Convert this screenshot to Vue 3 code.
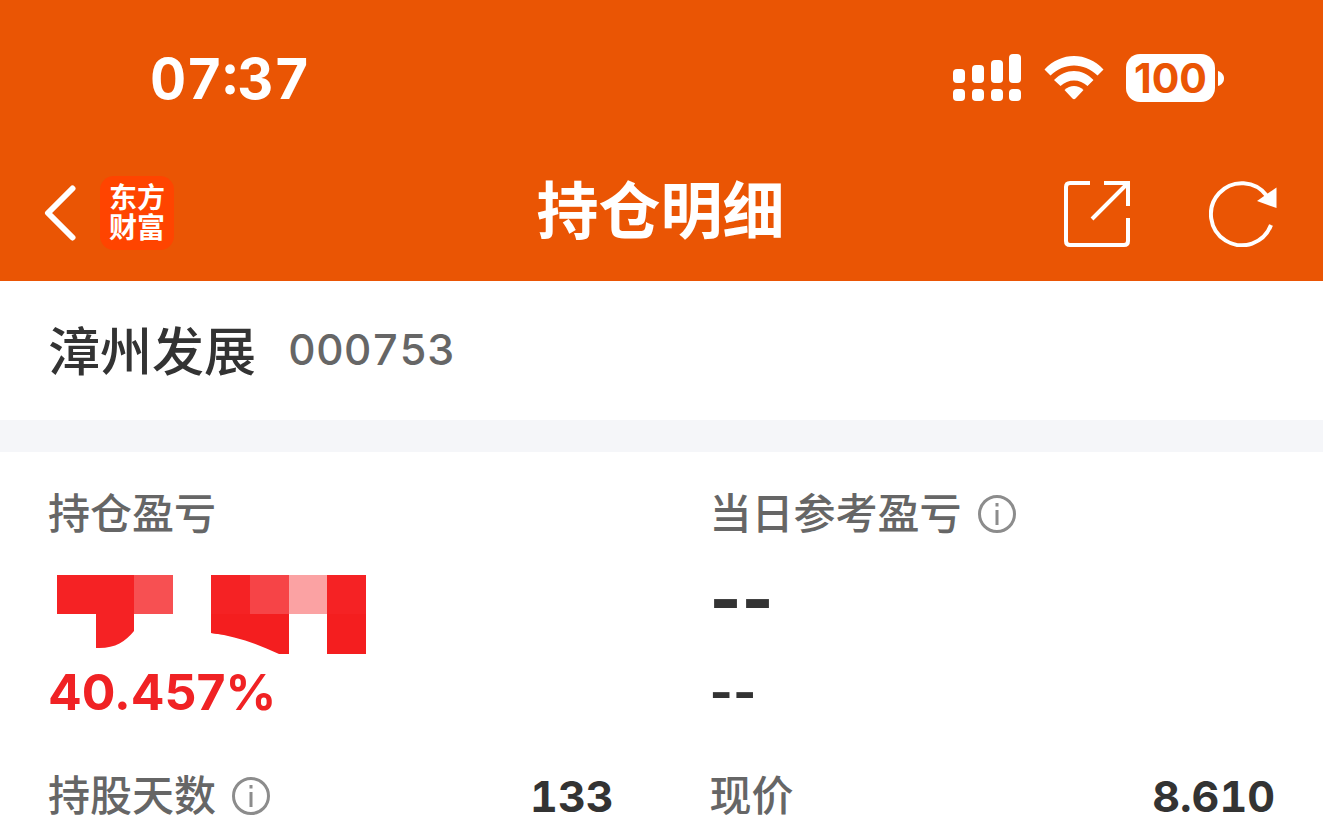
<template>
  <div class="page">
    <header class="header">
      <div class="status-bar">
        <time class="clock">07:37</time>
        <div class="status-icons">
          <svg class="signal" viewBox="0 0 69 48" role="img" aria-label="信号">
            <rect
              v-for="(bar, i) in signalBars"
              :key="i"
              :x="bar.x"
              :y="bar.y"
              width="12"
              :height="bar.height"
              rx="4"
            />
            <rect v-for="(bar, i) in signalBars" :key="'dot' + i" :x="bar.x" y="35" width="12" height="12" rx="4" />
          </svg>
          <svg class="wifi" viewBox="0 0 60 46" role="img" aria-label="Wi-Fi">
            <path d="M0.500 14.500C17 -3.500 43 -3.500 59.500 14.500L53.500 20.500C40 7 20 7 6.500 20.500Z" />
            <path d="M10 25C22 13 38 13 49.500 25L43.500 31C36 23.500 24 23.500 16.500 31Z" />
            <path d="M20.500 35C26 29.500 34 29.500 39.500 35L31.500 43.500Q30 45 28.500 43.500Z" />
          </svg>
          <div class="battery">
            <span class="battery-level">100</span>
            <svg class="battery-tip" viewBox="0 0 6 15" aria-hidden="true">
              <path d="M0 0C8 2 8 13 0 15Z" />
            </svg>
          </div>
        </div>
      </div>

      <nav class="nav">
        <div class="nav-side">
          <button type="button" class="icon-button" aria-label="返回">
            <svg class="back-icon" viewBox="0 0 32 56">
              <path d="M28.500 3.500L4 28L28.500 52.500" />
            </svg>
          </button>
          <a href="#" class="logo">东方财富</a>
        </div>
        <h1 class="title">持仓明细</h1>
        <div class="nav-side nav-actions">
          <button type="button" class="icon-button" aria-label="分享">
            <svg class="action-icon" viewBox="0 0 68 68">
              <path d="M27 4H7Q3 4 3 8V62Q3 66 7 66H61Q65 66 65 62V39" />
              <path d="M41 4H65V27M64 5L29 40" />
            </svg>
          </button>
          <button type="button" class="icon-button" aria-label="刷新">
            <svg class="action-icon" viewBox="0 0 68 68">
              <path d="M62 46A31 31 0 1 1 58 17" />
              <path class="arrow-head" d="M67.500 8.500V29L48 22Z" />
            </svg>
          </button>
        </div>
      </nav>
    </header>

    <section class="stock">
      <h2 class="stock-name">漳州发展</h2>
      <span class="stock-code">000753</span>
    </section>

    <main class="details">
      <div class="column">
        <div class="label">持仓盈亏</div>
        <div class="amount">
          <svg class="mosaic" viewBox="0 0 309 79" role="img" aria-label="已隐藏">
            <path fill="#f52224" d="M0 0H77V56C68 67 57 74 39 73V39H0Z" />
            <path fill="#f75052" d="M77 0H116V39H77Z" />
            <path fill="#f52224" d="M154 0H193V63L154 58Z" />
            <path fill="#f64447" d="M193 0H232V39H193Z" />
            <path fill="#fba2a3" d="M232 0H270V39H232Z" />
            <path fill="#f41e1f" d="M154 39H232V79H222C200 69 179 61 154 58Z" />
            <path fill="#f52224" d="M270 0H309V39H270Z" />
            <path fill="#f41e1f" d="M270 39H309V79H270Z" />
          </svg>
        </div>
        <div class="percent up">40.457%</div>
        <div class="row">
          <div class="label">
            持股天数
            <button type="button" class="icon-button" aria-label="持股天数说明">
              <svg class="info-icon" viewBox="0 0 38 38">
                <circle cx="19" cy="19" r="17.500" />
                <path d="M19 15V30M19 8V11.500" />
              </svg>
            </button>
          </div>
          <div class="value">133</div>
        </div>
      </div>

      <div class="column">
        <div class="label">
          当日参考盈亏
          <button type="button" class="icon-button" aria-label="当日参考盈亏说明">
            <svg class="info-icon" viewBox="0 0 38 38">
              <circle cx="19" cy="19" r="17.500" />
              <path d="M19 15V30M19 8V11.500" />
            </svg>
          </button>
        </div>
        <div class="amount">--</div>
        <div class="percent">--</div>
        <div class="row">
          <div class="label">现价</div>
          <div class="value">8.610</div>
        </div>
      </div>
    </main>
  </div>
</template>

<script setup>
const signalBars = [
  { x: 0, y: 15, height: 14 },
  { x: 19, y: 11, height: 18 },
  { x: 38, y: 6, height: 23 },
  { x: 56, y: 0, height: 29 }
]
</script>

<style>
body {
  margin: 0;
  background: #ffffff;
}
</style>

<style scoped>
.page {
  font-family: Inter, "Noto Sans CJK SC", sans-serif;
  color: #333333;
}

.header {
  background: #ea5504;
  color: #ffffff;
}

.status-bar {
  display: flex;
  align-items: center;
  justify-content: space-between;
  height: 156px;
  padding: 0 99px 0 150px;
}

.clock {
  padding-top: 2px;
  font-size: 56px;
  font-weight: 700;
  font-variant-numeric: tabular-nums;
  line-height: 72px;
}

.status-icons {
  display: flex;
  align-items: center;
  gap: 22px;
  fill: #ffffff;
}

.signal {
  width: 69px;
  height: 48px;
}

.wifi {
  width: 60px;
  height: 46px;
}

.battery {
  display: flex;
  align-items: center;
  gap: 3px;
}

.battery-level {
  width: 89px;
  border-radius: 14px;
  background: #ffffff;
  color: #ea5504;
  font-size: 41px;
  font-weight: 700;
  line-height: 48px;
  text-align: center;
}

.battery-tip {
  width: 6px;
  height: 15px;
}

.nav {
  display: flex;
  align-items: center;
  height: 125px;
  padding: 0 46px 12px 44px;
  box-sizing: border-box;
}

.nav-side {
  display: flex;
  flex: 1;
  align-items: center;
  gap: 24px;
}

.nav-actions {
  justify-content: flex-end;
  gap: 78px;
}

.icon-button {
  display: flex;
  padding: 0;
  border: none;
  background: none;
  cursor: pointer;
}

.back-icon {
  width: 32px;
  height: 56px;
  fill: none;
  stroke: #ffffff;
  stroke-width: 6;
  stroke-linecap: round;
  stroke-linejoin: round;
}

.logo {
  width: 56px;
  padding: 7px 9px;
  border-radius: 14px;
  background: #ff4400;
  color: #ffffff;
  font-size: 28px;
  font-weight: 700;
  line-height: 30px;
  text-decoration: none;
}

.title {
  margin: 0;
  padding-bottom: 2px;
  font-size: 62px;
  font-weight: 700;
  line-height: 72px;
}

.action-icon {
  width: 68px;
  height: 68px;
  fill: none;
  stroke: #ffffff;
  stroke-width: 4;
}

.arrow-head {
  fill: #ffffff;
  stroke: none;
}

.stock {
  display: flex;
  align-items: center;
  gap: 32px;
  height: 135px;
  padding: 0 48px 4px;
  border-bottom: 32px solid #f5f6f9;
}

.stock-name {
  margin: 0;
  font-size: 52px;
  font-weight: 500;
}

.stock-code {
  color: #666666;
  font-size: 43px;
  font-weight: 500;
  font-variant-numeric: tabular-nums;
}

.details {
  display: grid;
  grid-template-columns: 1fr 1fr;
  gap: 96px;
  padding: 32px 48px 0;
}

.label {
  display: flex;
  align-items: center;
  gap: 16px;
  color: #666666;
  font-size: 42px;
  font-weight: 500;
  line-height: 60px;
}

.info-icon {
  width: 38px;
  height: 38px;
  fill: none;
  stroke: #8c8c8c;
  stroke-width: 3;
}

.amount {
  display: flex;
  align-items: center;
  height: 110px;
  font-size: 68px;
  font-weight: 800;
}

.mosaic {
  width: 309px;
  height: 79px;
  margin: 31px 9px 0;
}

.percent {
  font-size: 50px;
  font-weight: 700;
  line-height: 76px;
}

.up {
  color: #f02224;
}

.row {
  display: flex;
  align-items: center;
  justify-content: space-between;
  margin-top: 36px;
}

.value {
  font-size: 43px;
  font-weight: 700;
  font-variant-numeric: tabular-nums;
  line-height: 60px;
}
</style>
